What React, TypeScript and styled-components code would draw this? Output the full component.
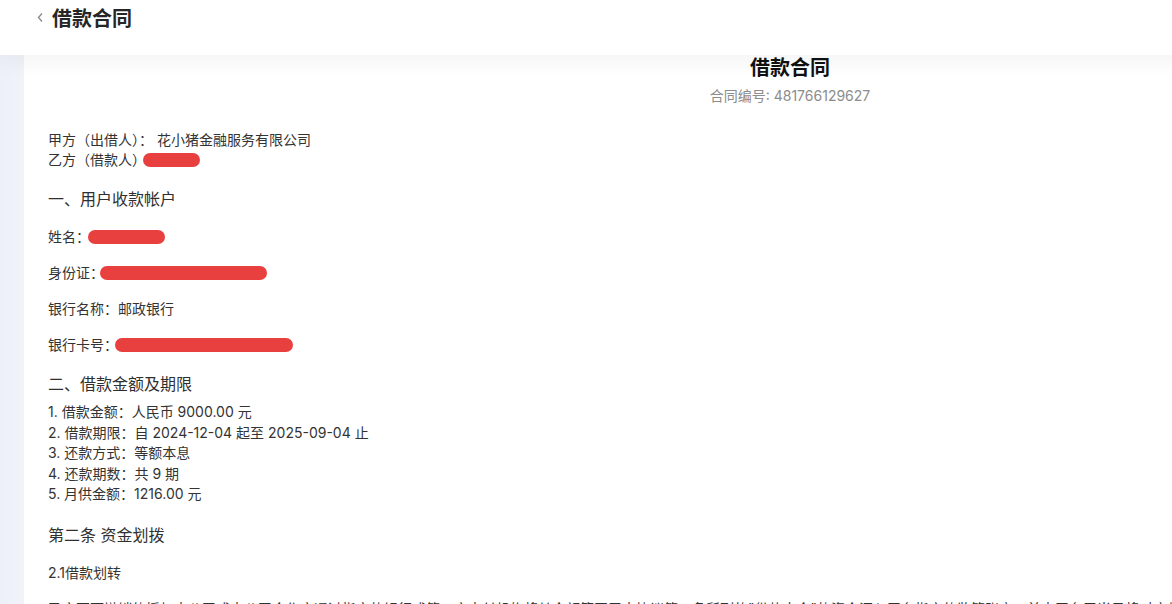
import { FC } from 'react';
import styled, { createGlobalStyle } from 'styled-components';

const GlobalStyle = createGlobalStyle`
   html, body {
      margin: 0;
      padding: 0;
      overflow: hidden;
      background: #ffffff;
   }
   body {
      font-family: Inter, "Noto Sans CJK SC", sans-serif;
      color: #333333;
   }
`;

interface FieldItem {
   label: string;
   value?: string;
   mask?: number;
   offset?: number;
}

const fields: FieldItem[] = [
   { label: '姓名：', mask: 77, offset: -2 },
   { label: '身份证：', mask: 167, offset: -4 },
   { label: '银行名称：', value: '邮政银行' },
   { label: '银行卡号：', mask: 178, offset: -3 },
];

const terms = [
   '1. 借款金额：人民币 9000.00 元',
   '2. 借款期限：自 2024-12-04 起至 2025-09-04 止',
   '3. 还款方式：等额本息',
   '4. 还款期数：共 9 期',
   '5. 月供金额：1216.00 元',
];

const BackIcon: FC = () => (
   <svg width="9" height="11" viewBox="0 0 9 11">
      <polyline points="6,1.5 2.5,5.5 6,9.5" fill="none" stroke="#8a8a8a" strokeWidth="1.3" />
   </svg>
);

export default function App() {
   return (
      <>
         <GlobalStyle />
         <Page>
            <Header>
               <Back>
                  <BackIcon />
               </Back>
               <HeaderTitle>借款合同</HeaderTitle>
            </Header>
            <Body>
               <SideStrip />
               <Card>
                  <DocTitle>借款合同</DocTitle>
                  <DocNo>合同编号: 481766129627</DocNo>

                  <Parties>
                     <Line>甲方（出借人）： 花小猪金融服务有限公司</Line>
                     <Line>
                        乙方（借款人）
                        <Mask $w={57} $offset={-3} />
                     </Line>
                  </Parties>

                  <SectionTitle>一、用户收款帐户</SectionTitle>
                  {fields.map((f) => (
                     <Field key={f.label}>
                        {f.label}
                        {f.value}
                        {f.mask && <Mask $w={f.mask} $offset={f.offset ?? 0} />}
                     </Field>
                  ))}

                  <SectionTitle>二、借款金额及期限</SectionTitle>
                  <TermList>
                     {terms.map((t) => (
                        <Term key={t}>{t}</Term>
                     ))}
                  </TermList>

                  <SectionTitle>第二条 资金划拨</SectionTitle>
                  <Field>2.1借款划转</Field>
                  <Field>
                     乙方不可撤销的授权本公司或本公司合作方通过指定的银行或第三方支付机构将其金额等同于本协议第一条所列的"借款本金"的资金汇入平台指定的监管账户，并由平台于当日将对应款项划转至乙方在本合同第一条中指定的收款账户，资金划转完成即视为甲方已履行出借义务。
                  </Field>
               </Card>
            </Body>
         </Page>
      </>
   );
}

// Styled Components
const Page = styled.div`
   width: 1556px;
   min-height: 604px;
`;

const Header = styled.header`
   position: relative;
   z-index: 2;
   height: 55px;
   box-sizing: border-box;
   padding: 6px 0 0 36px;
   display: flex;
   align-items: flex-start;
   gap: 7px;
   background: #ffffff;
   box-shadow: 0 6px 22px rgba(0, 0, 0, 0.05);
`;

const Back = styled.span`
   display: flex;
   align-items: center;
   height: 26px;
   margin-top: -2px;
`;

const HeaderTitle = styled.h1`
   margin: 0;
   font-size: 20px;
   line-height: 26px;
   font-weight: 700;
   color: #262626;
`;

const Body = styled.div`
   display: flex;
   min-height: 549px;
`;

const SideStrip = styled.div`
   flex: 0 0 24px;
   background: linear-gradient(90deg, #edf0f8 0%, #f2f3f9 100%);
`;

const Card = styled.main`
   flex: 0 0 1532px;
   box-sizing: border-box;
   padding: 0 24px;
   background: #ffffff;
   display: flex;
   flex-direction: column;
`;

const DocTitle = styled.h2`
   margin: 0;
   text-align: center;
   font-size: 20px;
   line-height: 26px;
   font-weight: 700;
   color: #111111;
`;

const DocNo = styled.div`
   margin-top: 5px;
   text-align: center;
   font-size: 14px;
   line-height: 19px;
   color: #8c8c8c;
`;

const Parties = styled.div`
   margin-top: 25px;
   font-size: 14px;
   line-height: 20px;
`;

const Line = styled.div`
   white-space: nowrap;
`;

const SectionTitle = styled.h3`
   margin: 17px 0 0;
   font-size: 16px;
   line-height: 24px;
   font-weight: 400;
   color: #2f2f2f;
`;

const Field = styled.p`
   margin: 16px 0 0;
   font-size: 14px;
   line-height: 20px;
`;

const TermList = styled.div`
   margin-top: 6px;
   margin-bottom: 1px;
   font-size: 14px;
   line-height: 20.5px;
`;

const Term = styled.div``;

const Mask = styled.span<{ $w: number; $offset: number }>`
   display: inline-block;
   vertical-align: -2px;
   width: ${(p) => p.$w}px;
   height: 14px;
   margin-left: ${(p) => p.$offset}px;
   border-radius: 7px;
   background: #e8403f;
`;
